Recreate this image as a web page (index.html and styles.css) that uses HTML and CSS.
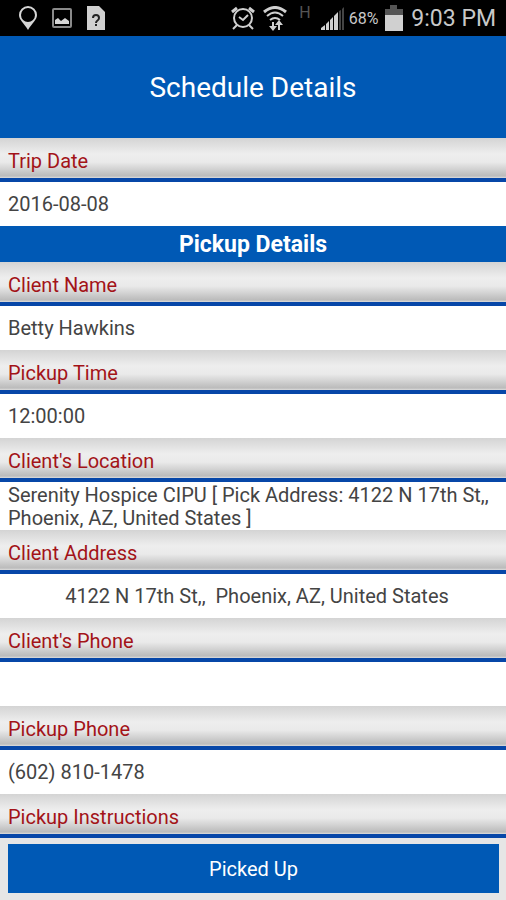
FILE: index.html
```html
<!DOCTYPE html>
<html lang="en">
<head>
  <meta charset="UTF-8">
  <title>Schedule Details</title>
  <meta name="viewport" content="width=device-width, initial-scale=1">
  <link rel="stylesheet" href="styles.css">
</head>
<body>
  <div class="status">
    <div class="notifications">
      <svg width="20" height="24" viewBox="0 0 20 24">
        <path fill="#d6d6d6" fill-rule="evenodd" d="M10 0a9 9 0 0 1 9 9c0 5-5 8-9 15C6 17 1 14 1 9a9 9 0 0 1 9-9zm0 2a7 7 0 1 0 0 14 7 7 0 0 0 0-14z"/>
      </svg>
      <svg width="20" height="20" viewBox="0 0 20 20">
        <rect x="1" y="1" width="18" height="18" rx="1" fill="none" stroke="#8a8a8a" stroke-width="2"/>
        <path fill="#d6d6d6" d="M3 16v-4l3-2 3 3 4-3 4 3v3z"/>
      </svg>
      <svg width="20" height="24" viewBox="0 0 20 24">
        <path fill="#d0d0d0" d="M1 0h12l6 6v18H1z"/>
        <path fill="none" stroke="#222" stroke-width="2" d="M7 12c0-4 6-4 6 0 0 3-3 2-3 5"/>
        <path fill="#222" d="M9 18h2v2H9z"/>
      </svg>
    </div>
    <div class="system">
      <svg width="24" height="24" viewBox="0 0 24 24" fill="none" stroke="#d0d0d0" stroke-width="2">
        <circle cx="12" cy="12" r="9"/>
        <path d="M8 11l4 3 5-5M6 19l-4 4M18 19l4 4"/>
        <path stroke-width="3" d="M1 6l5-4M18 2l5 4"/>
      </svg>
      <svg width="24" height="25" viewBox="0 0 24 25" fill="none" stroke="#d0d0d0" stroke-width="2">
        <path stroke-width="3" d="M1 6Q12-3 23 6"/>
        <path d="M4 10q8-7 16 0M7 14q5-4 10 0"/>
        <path d="M10 16v7M16 24v-7"/>
        <path fill="#d0d0d0" stroke="none" d="M6 20h8l-4 5zM12 19h8l-4-5z"/>
      </svg>
      <span class="network">H</span>
      <svg width="24" height="23" viewBox="0 0 24 23">
        <path fill="#d0d0d0" d="M0 23v-2l4-3v5zM5 23v-6l3-3v9zM9 23V13l3-3v13zM13 23V9l4-4v18z"/>
        <path fill="#444" d="M18 23V4l2-1v20zM21 23V2l2-2v23z"/>
      </svg>
      <span class="percent">68%</span>
      <svg width="18" height="26" viewBox="0 0 18 26">
        <path fill="#555" d="M0 4h5V0h7v4h6v7H0z"/>
        <path fill="#d0d0d0" d="M0 10h18v16H0z"/>
      </svg>
      <span class="clock">9:03 PM</span>
    </div>
  </div>

  <header class="header">
    <h1>Schedule Details</h1>
  </header>

  <main class="details">
    <dl>
      <dt>Trip Date</dt>
      <dd>2016-08-08</dd>
    </dl>
    <h2>Pickup Details</h2>
    <dl>
      <dt>Client Name</dt>
      <dd>Betty Hawkins</dd>
      <dt>Pickup Time</dt>
      <dd>12:00:00</dd>
      <dt>Client's Location</dt>
      <dd class="long">Serenity Hospice CIPU [ Pick Address: 4122 N 17th St,, Phoenix, AZ, United States ]</dd>
      <dt>Client Address</dt>
      <dd class="center">4122 N 17th St,,&nbsp; Phoenix, AZ, United States</dd>
      <dt>Client's Phone</dt>
      <dd></dd>
      <dt>Pickup Phone</dt>
      <dd>(602) 810-1478</dd>
      <dt>Pickup Instructions</dt>
    </dl>
  </main>

  <footer class="actions">
    <button type="button">Picked Up</button>
  </footer>
</body>
</html>
```
FILE: styles.css
```css
* {
  box-sizing: border-box;
}
body {
  margin: 0;
  height: 100vh;
  display: flex;
  flex-direction: column;
  background-color: #fff;
  color: #444;
  font-family: Roboto, sans-serif;
  font-size: 20px;
  line-height: 23px;
}
h1, h2, dl, dd {
  margin: 0;
}

/* status bar */
.status {
  flex: none;
  display: flex;
  justify-content: space-between;
  height: 36px;
  padding: 0 10px 0 18px;
  background-color: #000;
  color: #c8c8c8;
}
.notifications, .system {
  display: flex;
  align-items: center;
}
.notifications {
  gap: 14px;
}
.system {
  gap: 8px;
}
.network {
  align-self: flex-start;
  margin: 1px 2px 0 4px;
  color: #555;
  font-size: 16px;
}
.percent {
  margin: 0 -1px 0 -4px;
  font-size: 16px;
}
.clock {
  font-size: 23px;
}

.header {
  flex: none;
  padding: 37px 0 35px;
  background-color: #0059b5;
  color: #fff;
  text-align: center;
}
.header h1 {
  font-size: 28px;
  font-weight: 400;
  line-height: 30px;
}

/* label / value rows */
.details {
  flex: 1;
  min-height: 0;
  overflow: hidden;
}
h2 {
  padding: 7px 0 5px;
  background-color: #0059b5;
  color: #fff;
  font-size: 23px;
  font-weight: 700;
  line-height: 24px;
  text-align: center;
}
dt {
  padding: 12px 8px 5px;
  border-bottom: 4px solid #0747a8;
  background: linear-gradient(#d4d4d4, #eee 40%, #eaeaea 60%, #bbb 95%, #ddd);
  color: #a31318;
}
dd {
  min-height: 44px;
  padding: 11px 8px 10px;
}
dd.long {
  padding: 2px 8px 0;
}
dd.center {
  padding-left: 16px;
  text-align: center;
}

.actions {
  flex: none;
  padding: 6px 7px 7px 8px;
  background-color: #e6e6e6;
}
.actions button {
  display: block;
  width: 100%;
  height: 49px;
  padding: 2px 0 0;
  border: 0;
  background-color: #0059b5;
  color: #fff;
  font: inherit;
}
```
